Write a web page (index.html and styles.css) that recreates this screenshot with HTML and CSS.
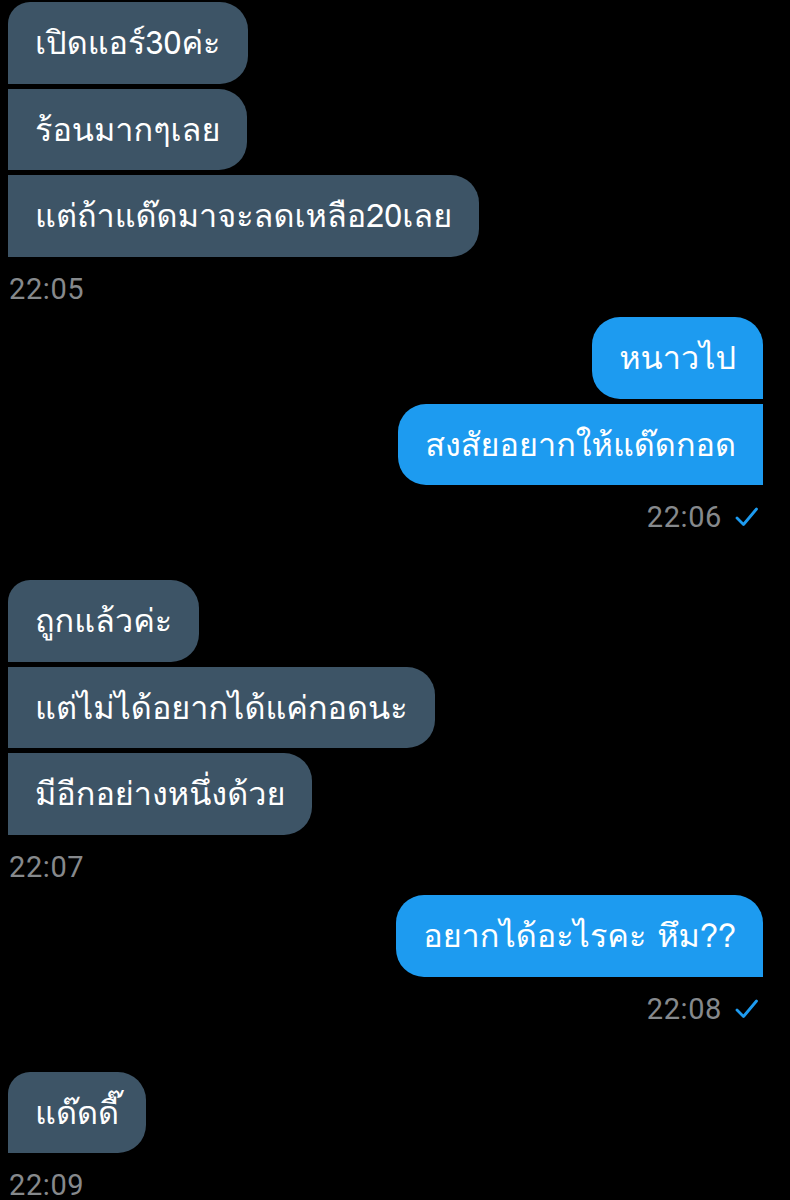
FILE: index.html
```html
<!DOCTYPE html>
<html>
<head>
  <title>Messages</title>
  <link rel="stylesheet" href="styles.css">
</head>
<body>

  <div class="chat">

    <div class="group received">
      <div class="bubble first">เปิดแอร์30ค่ะ</div>
      <div class="bubble">ร้อนมากๆเลย</div>
      <div class="bubble">แต่ถ้าแด๊ดมาจะลดเหลือ20เลย</div>
      <div class="time">22:05</div>
    </div>

    <div class="group sent">
      <div class="bubble first">หนาวไป</div>
      <div class="bubble">สงสัยอยากให้แด๊ดกอด</div>
      <div class="time">22:06
        <svg class="check" width="26" height="22" viewBox="0 0 26 22">
          <path d="M3 12 L9.5 18.5 L22.5 3" fill="none" stroke="#1d9bf0" stroke-width="2.8" stroke-linecap="round" stroke-linejoin="round"/>
        </svg>
      </div>
    </div>

    <div class="group received">
      <div class="bubble first">ถูกแล้วค่ะ</div>
      <div class="bubble">แต่ไม่ได้อยากได้แค่กอดนะ</div>
      <div class="bubble">มีอีกอย่างหนึ่งด้วย</div>
      <div class="time">22:07</div>
    </div>

    <div class="group sent">
      <div class="bubble first">อยากได้อะไรคะ หึม??</div>
      <div class="time">22:08
        <svg class="check" width="26" height="22" viewBox="0 0 26 22">
          <path d="M3 12 L9.5 18.5 L22.5 3" fill="none" stroke="#1d9bf0" stroke-width="2.8" stroke-linecap="round" stroke-linejoin="round"/>
        </svg>
      </div>
    </div>

    <div class="group received">
      <div class="bubble first">แด๊ดดี๊</div>
      <div class="time">22:09</div>
    </div>

  </div>

</body>
</html>
```

FILE: styles.css
```css
body {
  margin: 0;
  background: #000;
  font-family: "Loma", "Noto Sans Thai Looped", sans-serif;
}

.chat {
  padding: 2px 27px 0 8px;
}

.group {
  display: flex;
  flex-direction: column;
  gap: 5px;
}

.received {
  align-items: flex-start;
  margin-bottom: 10.5px;
}

.sent {
  align-items: flex-end;
  margin-bottom: 45px;
}

.bubble {
  color: #fff;
  font-size: 32.4px;
  line-height: 43.5px;
  height: 43.5px;
  padding: 19px 27px;
  white-space: nowrap;
}

.received .bubble {
  background: #3d5466;
  border-radius: 0 28px 28px 0;
}

.received .bubble.first {
  border-radius: 22px 28px 28px 0;
}

.sent .bubble {
  background: #1d9bf0;
  border-radius: 28px 0 0 28px;
}

.sent .bubble.first {
  border-radius: 28px 28px 0 28px;
}

.time {
  display: flex;
  align-items: center;
  gap: 12px;
  margin-top: 9px;
  height: 36px;
  color: #86898c;
  font-family: Roboto, "Liberation Sans", sans-serif;
  font-size: 29px;
  letter-spacing: 0.6px;
  padding-left: 1px;
}

.check {
  margin-right: 3px;
}
```
